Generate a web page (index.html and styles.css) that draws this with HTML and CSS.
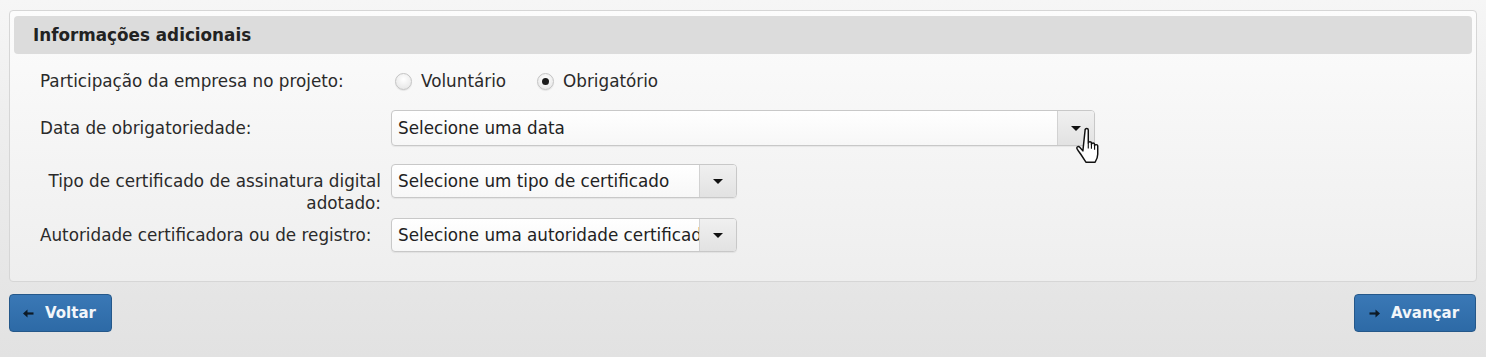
FILE: index.html
```html
<!DOCTYPE html>
<html lang="pt">
<head>
<meta charset="utf-8">
<title>Informações adicionais</title>
<link rel="stylesheet" href="styles.css">
</head>
<body>
<div class="page">
  <section class="panel">
    <h2 class="panel-header">Informações adicionais</h2>
    <div class="form">
      <div class="row row-radio">
        <div class="label">Participação da empresa no projeto:</div>
        <div class="control radios">
          <label class="radio"><span class="radio-dot"></span>Voluntário</label>
          <label class="radio checked"><span class="radio-dot"></span>Obrigatório</label>
        </div>
      </div>
      <div class="row row-date">
        <div class="label">Data de obrigatoriedade:</div>
        <div class="control">
          <div class="select select-wide">
            <span class="select-text">Selecione uma data</span>
            <span class="select-btn"><span class="caret"></span></span>
          </div>
          <svg class="cursor" width="34" height="45" viewBox="0 0 30 40">
            <path d="M8 3.5c0-1.6 2.8-1.6 2.8 0v11.5c0.3-1.4 2.7-1.4 2.8 0v1.2c0.3-1.4 2.7-1.4 2.8 0v1.3c0.3-1.3 2.7-1.3 2.8 0.2v7.5c0 3-1 5-2.3 7h-8.2l-4.7-7.3c-1.1-1.6-3.4-4.4-3.4-5.4c0-1.3 1.6-1.7 2.6-0.6l2.8 3.2z" fill="#fff" stroke="#111" stroke-width="1.3" stroke-linejoin="round"/>
            <path d="M10.8 15v5M13.6 16.2v4M16.4 17.5v3.5" stroke="#111" stroke-width="1" fill="none"/>
          </svg>
        </div>
      </div>
      <div class="row row-cert">
        <div class="label label-right">Tipo de certificado de assinatura digital adotado:</div>
        <div class="control">
          <div class="select select-small">
            <span class="select-text">Selecione um tipo de certificado</span>
            <span class="select-btn"><span class="caret"></span></span>
          </div>
        </div>
      </div>
      <div class="row row-auth">
        <div class="label">Autoridade certificadora ou de registro:</div>
        <div class="control">
          <div class="select select-small">
            <span class="select-text">Selecione uma autoridade certificadora</span>
            <span class="select-btn"><span class="caret"></span></span>
          </div>
        </div>
      </div>
    </div>
  </section>
  <div class="actions">
    <button class="btn btn-back">
      <svg class="arrow" width="11" height="9" viewBox="0 0 11 9"><path d="M10.5 4.5H3.5" stroke="#0d1a26" stroke-width="2.2"/><path d="M0 4.5L4.5 0.5V8.5Z" fill="#0d1a26"/></svg>Voltar
    </button>
    <button class="btn btn-next">
      <svg class="arrow" width="11" height="9" viewBox="0 0 11 9"><path d="M0.5 4.5H7.5" stroke="#0d1a26" stroke-width="2.2"/><path d="M11 4.5L6.5 0.5V8.5Z" fill="#0d1a26"/></svg>Avançar
    </button>
  </div>
</div>
</body>
</html>
```
FILE: styles.css
```css
* { box-sizing: border-box; }
html, body { margin: 0; height: 100%; }
body {
  background: linear-gradient(#f6f6f6 0px, #eeeeee 120px, #e2e2e2 357px);
  font-family: "DejaVu Sans", Verdana, sans-serif;
  font-size: 16.8px;
  color: #2a2a2a;
}
.page { padding: 10px 9px 0 9px; }
.panel {
  border: 1px solid #d6d6d6;
  border-radius: 4px;
  background: linear-gradient(#fcfcfc, #eeeeee);
  padding: 5px 4px 29px 4px;
}
.panel-header {
  margin: 0;
  height: 38px;
  line-height: 38px;
  background: #dcdcdc;
  border-radius: 4px;
  padding-left: 19px;
  font-size: 16.8px;
  font-weight: bold;
  color: #222;
}
.form { padding-left: 26px; }
.row { display: flex; align-items: center; }
.label { width: 351px; flex: none; line-height: 22px; }
.label-right { text-align: right; padding-right: 10px; padding-left: 4px; }
.control { position: relative; display: flex; align-items: center; }
.row-radio { margin-top: 14px; height: 26px; }
.row-date { margin-top: 16px; }
.row-cert { margin-top: 18px; align-items: flex-start; }
.row-cert .label { padding-top: 6px; }
.row-auth { margin-top: 4px; }
.radios { gap: 31px; padding-left: 4px; }
.radio { display: flex; align-items: center; gap: 9px; }
.radio-dot {
  width: 17px; height: 17px; border-radius: 50%;
  border: 1px solid #c4c4c4;
  background: radial-gradient(circle at 50% 35%, #ffffff, #e2e2e2);
  box-shadow: 0 1px 1px rgba(0,0,0,0.08);
  display: flex; align-items: center; justify-content: center;
}
.radio.checked .radio-dot::after {
  content: "";
  width: 7px; height: 7px; border-radius: 50%;
  background: #1a1a1a;
}
.select {
  display: flex;
  align-items: stretch;
  background: linear-gradient(#ffffff, #f7f7f7);
  border: 1px solid #c8c8c8;
  border-radius: 4px;
  box-shadow: 0 1px 1px rgba(0,0,0,0.06);
  overflow: hidden;
}
.select-wide { width: 704px; height: 36px; }
.select-small { width: 346px; height: 34px; }
.select-text {
  flex: 1;
  padding-left: 6px;
  display: flex; align-items: center;
  white-space: nowrap; overflow: hidden;
  color: #222;
}
.select-btn {
  width: 37px; flex: none;
  background: linear-gradient(#f0f0f0, #e2e2e2);
  border-left: 1px solid #d2d2d2;
  display: flex; align-items: center; justify-content: center;
}
.caret {
  width: 0; height: 0;
  border-left: 5px solid transparent;
  border-right: 5px solid transparent;
  border-top: 5px solid #111;
}
.cursor { position: absolute; left: 685px; top: 16px; }
.actions {
  display: flex; justify-content: space-between;
  margin-top: 12px;
}
.btn {
  height: 38px;
  background: linear-gradient(#3a78b6, #2d6aa6);
  border: 1px solid #25588a;
  border-radius: 4px;
  color: #f2f6fa;
  font-family: "DejaVu Sans", Verdana, sans-serif;
  font-size: 15px;
  font-weight: bold;
  display: flex; align-items: center;
  padding: 0;
}
.btn-back { width: 103px; padding-left: 13px; }
.btn-next { width: 122px; padding-left: 14px; margin-right: 1px; }
.arrow { margin-right: 11px; flex: none; }
```
